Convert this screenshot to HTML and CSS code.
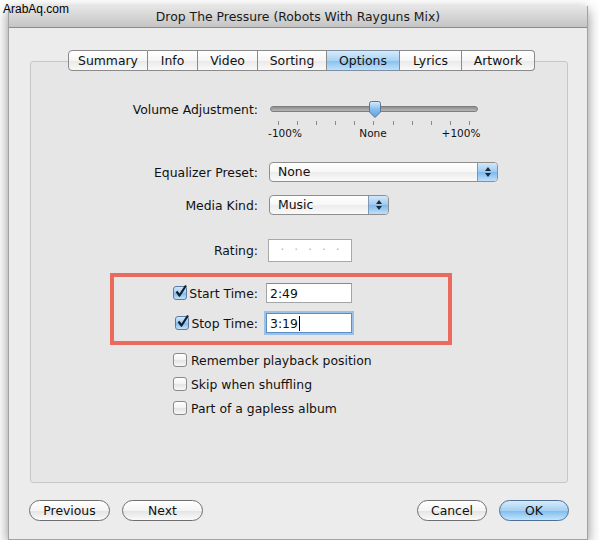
FILE: index.html
```html
<!DOCTYPE html>
<html lang="en">
<head>
  <meta charset="UTF-8">
  <title>Drop The Pressure (Robots With Rayguns Mix)</title>
  <link rel="stylesheet" href="styles.css">
</head>
<body>
  <div class="mark">ArabAq.com</div>

  <div class="window">
    <div class="titlebar">Drop The Pressure (Robots With Rayguns Mix)</div>

    <div class="content">
      <div class="tabs">
        <span class="tab w-summary">Summary</span>
        <span class="tab w-info">Info</span>
        <span class="tab w-video">Video</span>
        <span class="tab w-sorting">Sorting</span>
        <span class="tab w-options selected">Options</span>
        <span class="tab w-lyrics">Lyrics</span>
        <span class="tab w-artwork">Artwork</span>
      </div>

      <div class="pane">
        <div class="row vol-row">
          <span class="label">Volume Adjustment:</span>
          <div class="slider">
            <div class="track"></div>
            <svg class="thumb" width="14" height="18" viewBox="0 0 14 18">
              <defs>
                <linearGradient id="thumbFill" x1="0" y1="0" x2="0" y2="1">
                  <stop offset="0" stop-color="#d8ecfc"/>
                  <stop offset="0.5" stop-color="#86bdec"/>
                  <stop offset="1" stop-color="#5fa2e0"/>
                </linearGradient>
              </defs>
              <path d="M1.5 2.5 Q1.5 0.5 3.5 0.5 H10.5 Q12.5 0.5 12.5 2.5 V11 L7 16.5 L1.5 11 Z" fill="url(#thumbFill)" stroke="#5a7596" stroke-width="1"/>
            </svg>
          </div>
        </div>
        <div class="ticks">
          <span></span><span></span><span></span><span></span><span></span><span></span>
          <span></span><span></span><span></span><span></span><span></span>
        </div>
        <div class="scale">
          <span>-100%</span>
          <span>None</span>
          <span>+100%</span>
        </div>

        <div class="row eq-row">
          <span class="label">Equalizer Preset:</span>
          <div class="popup wide">
            <span class="popup-text">None</span>
            <span class="popup-arrows">
              <svg width="8" height="12" viewBox="0 0 8 12"><path d="M4 1 L7 5 H1 Z M4 11 L7 7 H1 Z" fill="#1c2a3a"/></svg>
            </span>
          </div>
        </div>

        <div class="row media-row">
          <span class="label">Media Kind:</span>
          <div class="popup narrow">
            <span class="popup-text">Music</span>
            <span class="popup-arrows">
              <svg width="8" height="12" viewBox="0 0 8 12"><path d="M4 1 L7 5 H1 Z M4 11 L7 7 H1 Z" fill="#1c2a3a"/></svg>
            </span>
          </div>
        </div>

        <div class="row rating-row">
          <span class="label">Rating:</span>
          <div class="rating">
            <span>·</span><span>·</span><span>·</span><span>·</span><span>·</span>
          </div>
        </div>

        <div class="highlight">
          <div class="time-row">
            <label class="time-label">
              <span class="check checked">
                <svg width="16" height="16" viewBox="0 0 16 16"><path d="M3.5 7.5 L6.5 11.5 L13 1.5" fill="none" stroke="#10202f" stroke-width="2.2" stroke-linejoin="round"/></svg>
              </span>
              Start Time:
            </label>
            <div class="field">2:49</div>
          </div>
          <div class="time-row">
            <label class="time-label">
              <span class="check checked">
                <svg width="16" height="16" viewBox="0 0 16 16"><path d="M3.5 7.5 L6.5 11.5 L13 1.5" fill="none" stroke="#10202f" stroke-width="2.2" stroke-linejoin="round"/></svg>
              </span>
              Stop Time:
            </label>
            <div class="field focused">3:19<span class="caret"></span></div>
          </div>
        </div>

        <div class="options">
          <label class="option"><span class="check"></span>Remember playback position</label>
          <label class="option"><span class="check"></span>Skip when shuffling</label>
          <label class="option"><span class="check"></span>Part of a gapless album</label>
        </div>
      </div>

      <div class="buttons">
        <div class="group">
          <button class="pill w-prev">Previous</button>
          <button class="pill w-next">Next</button>
        </div>
        <div class="group">
          <button class="pill w-cancel">Cancel</button>
          <button class="pill default w-ok">OK</button>
        </div>
      </div>
    </div>
  </div>
</body>
</html>
```

FILE: styles.css
```css
body {
  margin: 0;
  background: #ffffff;
  font-family: "DejaVu Sans", Verdana, sans-serif;
  font-size: 12.4px;
  color: #111;
}

.mark {
  position: absolute;
  left: 3px;
  top: 2px;
  z-index: 5;
  font-family: "Liberation Sans", Arial, sans-serif;
  font-size: 12px;
  color: #000;
}

.window {
  box-sizing: border-box;
  margin: 6px 0 0 8px;
  width: 580px;
  height: 534px;
  background: #ececec;
  border: 1px solid #a2a2a2;
  border-top: none;
  box-shadow: 0 4px 12px rgba(0, 0, 0, 0.45);
}

.titlebar {
  height: 21px;
  line-height: 22px;
  text-align: center;
  color: #1a1a1a;
  background: linear-gradient(#e6e6e6, #d2d2d2 60%, #c4c4c4);
  border-bottom: 1px solid #8c8c8c;
}

.content {
  padding-top: 22px;
}

/* tab strip */
.tabs {
  position: relative;
  z-index: 1;
  display: flex;
  margin-left: 59px;
  height: 21px;
}

.tab {
  box-sizing: border-box;
  height: 21px;
  line-height: 20px;
  text-align: center;
  background: linear-gradient(#ffffff, #f6f6f6 50%, #e9e9e9 51%, #f9f9f9);
  border: 1px solid #8a8a8a;
  border-left: none;
}

.tab:first-child {
  border-left: 1px solid #8a8a8a;
  border-radius: 4px 0 0 4px;
}

.tab:last-child {
  border-radius: 0 4px 4px 0;
}

.tab.selected {
  background: linear-gradient(#d6ebfb, #a9d3f4 50%, #86bfee 51%, #c0e1fa);
  border-color: #7d8ea3;
}

.w-summary { width: 80px; }
.w-info { width: 50px; }
.w-video { width: 60px; }
.w-sorting { width: 69px; }
.w-options { width: 73px; }
.w-lyrics { width: 62px; }
.w-artwork { width: 73px; }

.pane {
  box-sizing: border-box;
  margin: -10px 0 0 21px;
  width: 538px;
  height: 422px;
  padding-top: 36px;
  background: #e6e6e6;
  border: 1px solid #c6c6c6;
  border-radius: 3px;
}

.row {
  display: flex;
  align-items: center;
}

.label {
  width: 227px;
  text-align: right;
  flex-shrink: 0;
}

/* volume slider */
.vol-row {
  height: 22px;
}

.slider {
  position: relative;
  margin-left: 12px;
  width: 208px;
  height: 22px;
}

.track {
  margin-top: 8px;
  height: 4px;
  border: 1px solid #7e7e7e;
  border-radius: 3px;
  background: linear-gradient(#8e8e8e, #b8b8b8);
}

.thumb {
  position: absolute;
  left: 98px;
  top: 3px;
}

.ticks {
  display: flex;
  justify-content: space-between;
  margin: 1px 0 0 247px;
  width: 192px;
  height: 5px;
}

.ticks span {
  width: 1px;
  height: 4px;
  background: #8a8a8a;
}

.scale {
  display: grid;
  grid-template-columns: 40px 40px 40px;
  column-gap: 48px;
  margin-left: 234px;
  height: 14px;
  line-height: 14px;
  font-size: 10.5px;
  text-align: center;
}

/* popups */
.eq-row {
  margin-top: 22px;
}

.media-row {
  margin-top: 13px;
}

.popup {
  box-sizing: border-box;
  display: flex;
  margin-left: 11px;
  height: 20px;
  border: 1px solid #8e8e8e;
  border-radius: 4px;
  overflow: hidden;
  background: linear-gradient(#ffffff, #f7f7f7 50%, #ececec 51%, #fafafa);
}

.popup.wide { width: 229px; }
.popup.narrow { width: 120px; }

.popup-text {
  flex: 1;
  padding-left: 8px;
  line-height: 18px;
}

.popup-arrows {
  display: flex;
  align-items: center;
  justify-content: center;
  width: 19px;
  border-left: 1px solid #7f97b4;
  background: linear-gradient(#d3e8fa, #9ccaf1 50%, #7db8ec 51%, #bfe0fa);
}

/* rating */
.rating-row {
  margin-top: 24px;
}

.rating {
  box-sizing: border-box;
  display: flex;
  justify-content: center;
  gap: 10px;
  margin-left: 10px;
  width: 84px;
  height: 23px;
  line-height: 21px;
  background: #ffffff;
  border: 1px solid #a8a8a8;
  color: #b5b5b5;
  font-size: 12px;
}

/* annotation box */
.highlight {
  box-sizing: border-box;
  margin: 11px 0 0 79px;
  width: 342px;
  height: 72px;
  padding-top: 6px;
  border: 4px solid #ea6a5e;
}

.time-row {
  display: flex;
  align-items: center;
  margin-bottom: 10px;
}

.time-label {
  display: flex;
  align-items: center;
  justify-content: flex-end;
  gap: 2px;
  width: 144px;
}

.field {
  box-sizing: border-box;
  margin-left: 8px;
  width: 86px;
  height: 20px;
  padding-left: 3px;
  line-height: 19px;
  background: #ffffff;
  border: 1px solid #a4a4a4;
  border-top-color: #8a8a8a;
}

.field.focused {
  border-color: #5b8dc6;
  box-shadow: 0 0 0 2px #9dc0e6;
}

.caret {
  display: inline-block;
  width: 1px;
  height: 15px;
  margin-left: 1px;
  vertical-align: -3px;
  background: #000;
}

/* checkboxes */
.check {
  position: relative;
  box-sizing: border-box;
  display: inline-block;
  width: 14px;
  height: 14px;
  flex-shrink: 0;
  border: 1px solid #8a8a8a;
  border-radius: 3px;
  background: linear-gradient(#ffffff, #f2f2f2 50%, #e4e4e4 51%, #f7f7f7);
}

.check.checked {
  border-color: #5a7ba3;
  background: linear-gradient(#d2e8fa, #9dcbf1 50%, #7fb9ec 51%, #c2e2fa);
}

.check svg {
  position: absolute;
  left: -1px;
  top: -3px;
}

.options {
  margin: 3px 0 0 142px;
}

.option {
  display: flex;
  align-items: center;
  gap: 4px;
  height: 24px;
}

/* bottom buttons */
.buttons {
  display: flex;
  justify-content: space-between;
  margin-top: 17px;
  padding: 0 18px 0 20px;
}

.group {
  display: flex;
  gap: 12px;
}

.pill {
  height: 21px;
  padding: 0;
  font-family: inherit;
  font-size: 12.4px;
  color: #111;
  border: 1px solid #6e6e6e;
  border-radius: 11px;
  background: linear-gradient(#ffffff, #f4f4f4 50%, #e3e3e3 51%, #fafafa);
}

.pill.default {
  border-color: #4d7096;
  background: linear-gradient(#d7ebfb, #a4d0f3 50%, #7ebbee 51%, #c4e4fb);
}

.w-prev { width: 81px; }
.w-next { width: 81px; }
.w-cancel { width: 70px; }
.w-ok { width: 70px; }
```
